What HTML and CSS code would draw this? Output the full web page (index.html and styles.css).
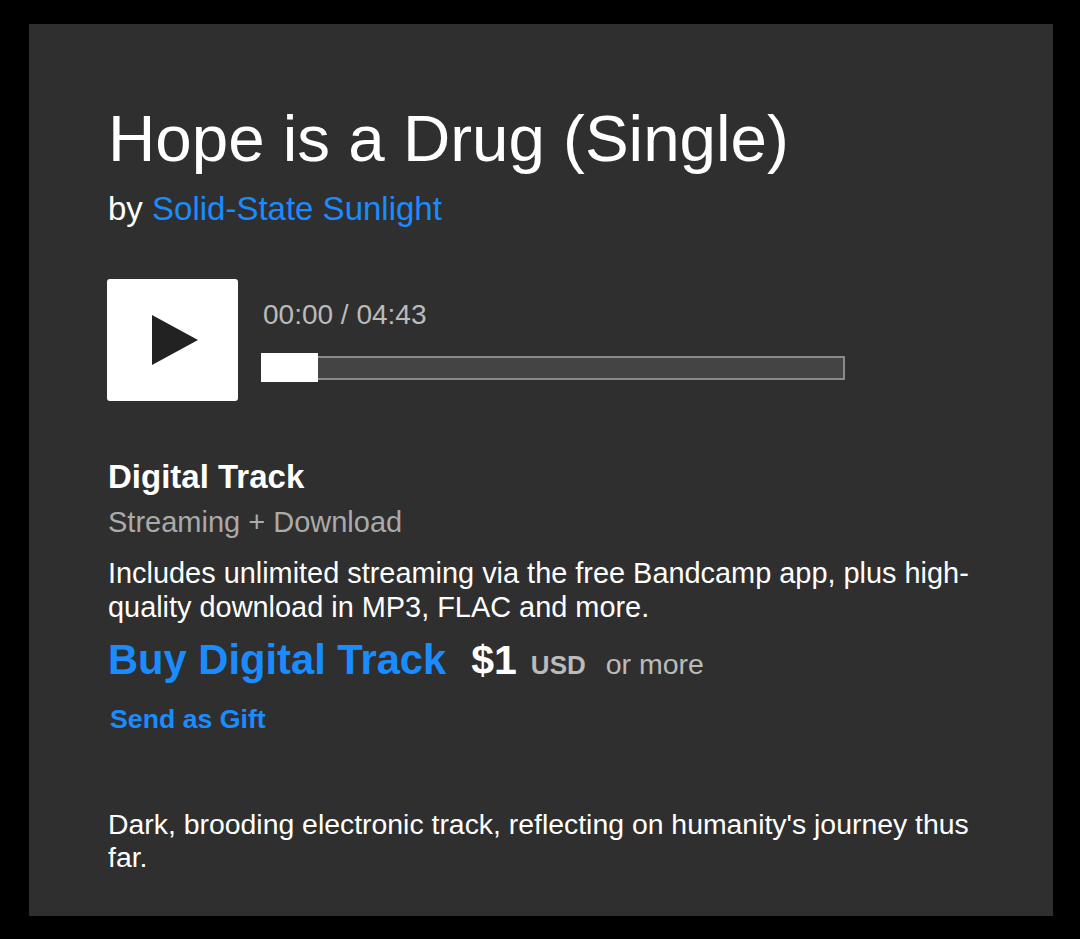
FILE: index.html
```html
<!DOCTYPE html>
<html lang="en">
<head>
    <meta charset="UTF-8">
    <meta name="viewport" content="width=device-width, initial-scale=1.0">
    <title>Hope is a Drug (Single) | Solid-State Sunlight</title>
    <link rel="stylesheet" href="styles.css">
</head>
<body>
    <div class="album">
        <h1 class="title">Hope is a Drug (Single)</h1>
        <div class="artist">by <a href="#">Solid-State Sunlight</a></div>

        <div class="player">
            <button class="play-button" aria-label="Play">
                <svg width="46" height="50" viewBox="0 0 46 50">
                    <polygon points="0,0 46,25 0,50" fill="#222222"/>
                </svg>
            </button>
            <div class="track-info">
                <div class="time">00:00 / 04:43</div>
                <div class="progress">
                    <div class="progress-thumb"></div>
                </div>
            </div>
        </div>

        <div class="buy">
            <h2>Digital Track</h2>
            <div class="format">Streaming + Download</div>
            <p class="buy-desc">Includes unlimited streaming via the free Bandcamp app, plus high-quality download in MP3, FLAC and more.</p>
            <div class="price-line">
                <a href="#" class="buy-link">Buy Digital Track</a>
                <span class="price">$1</span>
                <span class="currency">USD</span>
                <span class="or-more">or more</span>
            </div>
            <a href="#" class="gift">Send as Gift</a>
        </div>

        <p class="about">Dark, brooding electronic track, reflecting on humanity's journey thus far.</p>
    </div>
</body>
</html>
```

FILE: styles.css
```css
body {
    margin: 0;
    background-color: #000000;
    font-family: "Liberation Sans", Arial, sans-serif;
    color: #ffffff;
}
a {
    color: #1a8cff;
    text-decoration: none;
}
.album {
    margin: 24px 0 0 29px;
    width: 1024px;
    box-sizing: border-box;
    padding: 77px 79px 42px 79px;
    background-color: #2f2f2f;
}
.title {
    margin: 0;
    font-size: 65.5px;
    font-weight: normal;
    line-height: 75px;
}
.artist {
    margin-top: 13px;
    font-size: 33px;
    line-height: 40px;
}
.player {
    display: flex;
    gap: 23px;
    margin-top: 50px;
}
.play-button {
    width: 131px;
    height: 122px;
    margin-left: -1px;
    border: none;
    border-radius: 3px;
    background-color: #ffffff;
    display: flex;
    justify-content: center;
    align-items: center;
    padding: 0 0 0 4px;
    cursor: pointer;
}
.track-info {
    padding-top: 20px;
}
.time {
    font-size: 28px;
    line-height: 32px;
    color: #bbbbbb;
    padding-left: 2px;
}
.progress {
    position: relative;
    margin-top: 22px;
    width: 584px;
    height: 29px;
    display: flex;
    align-items: center;
}
.progress::before {
    content: "";
    flex: 1;
    height: 20px;
    border: 2px solid #8a8a8a;
    background-color: #444444;
}
.progress-thumb {
    position: absolute;
    left: 0;
    top: 0;
    width: 57px;
    height: 29px;
    background-color: #ffffff;
}
.buy h2 {
    margin: 57px 0 0 0;
    font-size: 33px;
    line-height: 37px;
}
.format {
    margin-top: 10px;
    font-size: 29px;
    line-height: 34px;
    color: #aaaaaa;
}
.buy-desc {
    margin: 17px 0 0 0;
    font-size: 28.9px;
    line-height: 34px;
}
.price-line {
    margin-top: 13px;
    line-height: 46px;
    display: flex;
    align-items: baseline;
}
.buy-link {
    font-size: 41.7px;
    font-weight: bold;
}
.price {
    margin-left: 25px;
    font-size: 41px;
    font-weight: bold;
}
.currency {
    margin-left: 14px;
    font-size: 26px;
    font-weight: bold;
    color: #bbbbbb;
}
.or-more {
    margin-left: 20px;
    font-size: 28.5px;
    color: #bbbbbb;
}
.gift {
    display: inline-block;
    margin: 16px 0 0 2px;
    font-size: 26.7px;
    font-weight: bold;
    line-height: 30px;
}
.about {
    margin: 74px 0 0 0;
    font-size: 28.4px;
    line-height: 33px;
}
```
